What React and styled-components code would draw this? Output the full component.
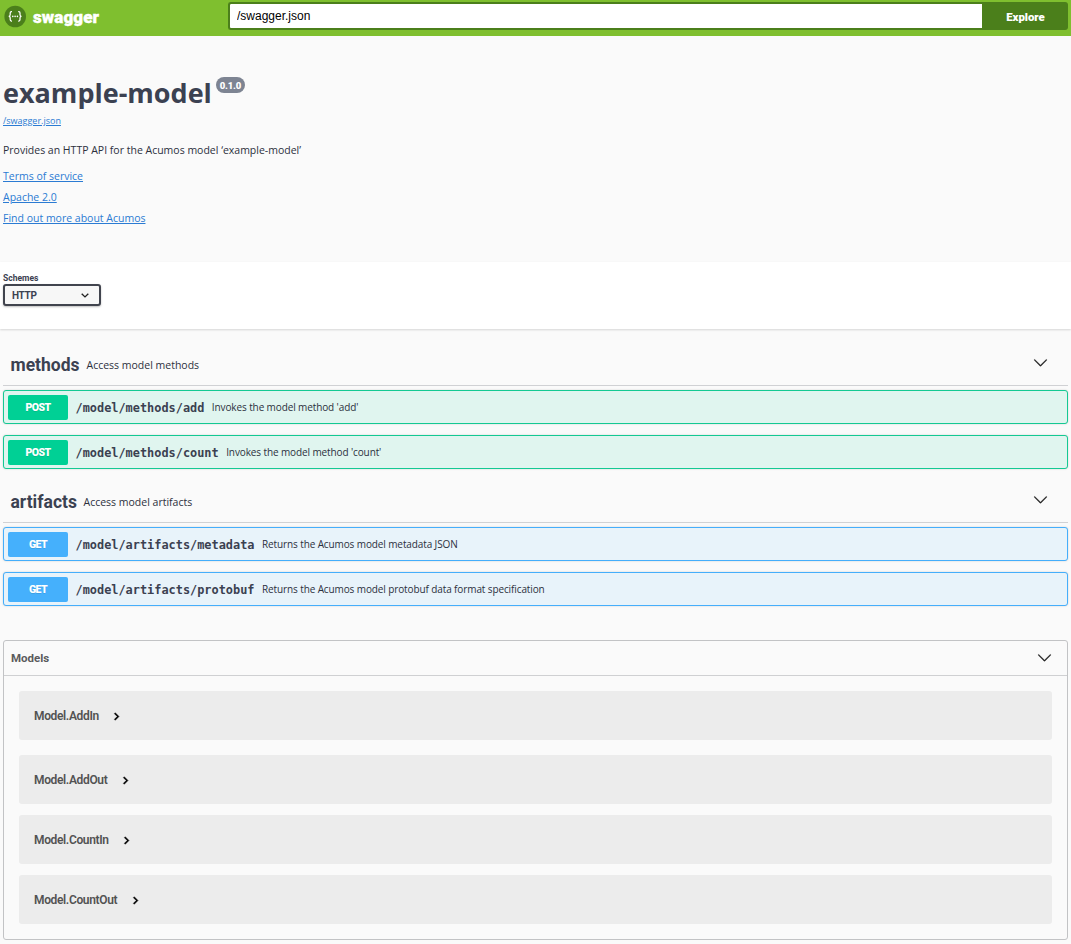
import React from "react";
import styled, { createGlobalStyle } from "styled-components";

const GlobalStyle = createGlobalStyle`
  *, *::before, *::after { box-sizing: border-box; }
  body {
    margin: 0;
    background: #fafafa;
    color: #3b4151;
    font-family: "Open Sans", sans-serif;
    font-size: 10.5px;
  }
`;

const display = `"Roboto", "Open Sans", sans-serif`;
const copyColor = "#2c303d";

const Page = styled.div`
  height: 944px;
  overflow: hidden;
`;

const TopBar = styled.header`
  display: flex;
  height: 36px;
  padding: 2px 3px 6px 4px;
  background: #7fbf2f;
`;

const Brand = styled.a`
  display: flex;
  align-items: center;
  width: 224px;
  color: #fff;
`;

const BrandIcon = styled.svg`
  width: 23px;
  height: 23px;
  margin-right: 6px;
`;

const BrandName = styled.span`
  font: 900 17px/22px ${display};
  letter-spacing: 0.1px;
  padding-top: 2px;
  -webkit-text-stroke: 0.4px #fff;
`;

const UrlInput = styled.input`
  flex: 1;
  min-width: 0;
  height: 28px;
  margin: 0;
  padding: 0 7px;
  border: 2px solid #4b7f1b;
  border-right: 0;
  border-radius: 3px 0 0 3px;
  outline: 0;
  background: #fff;
  color: #000;
  font: 12px/24px "Liberation Sans", Arial, sans-serif;
`;

const ExploreButton = styled.button`
  width: 86px;
  height: 28px;
  border: 0;
  border-radius: 0 3px 3px 0;
  padding: 1px 0 0 1px;
  background: #4b7f1b;
  color: #fff;
  font: 900 11.4px/24px ${display};
`;

const Info = styled.section`
  height: 226px;
  padding: 37px 3px 0;
`;

const TitleRow = styled.div`
  display: flex;
  align-items: flex-start;
`;

const Title = styled.h1`
  margin: 0;
  font: 700 27px/40px "Open Sans", sans-serif;
`;

const Version = styled.span`
  margin: 4px 0 0 4px;
  height: 16px;
  width: 29px;
  border-radius: 8px;
  background: #7d8492;
  color: #fff;
  text-align: center;
  font: 900 9.5px/17px ${display};
  letter-spacing: -0.2px;
`;

const SpecLink = styled.a`
  display: block;
  width: max-content;
  margin-top: 1px;
  color: #2b7bd3;
  font-size: 9px;
  line-height: 14px;
  text-decoration: underline;
`;

const Description = styled.p`
  margin: 14px 0 10px;
  color: ${copyColor};
  line-height: 16px;
`;

const InfoLink = styled.a`
  display: block;
  width: max-content;
  margin-bottom: 5px;
  color: #2b7bd3;
  line-height: 16px;
  text-decoration: underline;
`;

const SchemeBar = styled.section`
  height: 67px;
  padding: 10px 3px 0;
  background: #fff;
  box-shadow: 0 1px 2px rgba(0, 0, 0, 0.15);
`;

const SchemeLabel = styled.div`
  font: 700 8.5px/12px ${display};
`;

const SchemeSelect = styled.div`
  display: flex;
  align-items: center;
  justify-content: space-between;
  width: 98px;
  height: 22px;
  padding: 0 8px 0 7px;
  border: 2px solid #41444e;
  border-radius: 3px;
  background: #f7f7f7;
  box-shadow: 0 1px 2px rgba(0, 0, 0, 0.25);
  font: 700 10px/18px ${display};
  letter-spacing: -0.3px;
`;

const SchemeValue = styled.span`
  padding-top: 1px;
`;

const Content = styled.main`
  padding: 16px 3px 0;
`;

const TagSection = styled.section`
  height: 137px;
`;

const TagHeader = styled.div`
  display: flex;
  align-items: center;
  height: 41px;
  margin-bottom: 4px;
  padding: 0 20px 0 7.5px;
  border-bottom: 1px solid #d0d1d4;
`;

const TagName = styled.h2`
  margin: 0 7px 0 0;
  width: ${(p) => p.$w}px;
  white-space: nowrap;
  font: 700 17.5px/24px ${display};
`;

const TagText = styled.span`
  flex: 1;
  color: ${copyColor};
  line-height: 16px;
`;

const ArrowIcon = styled.svg`
  width: 15px;
  height: 15px;
  margin-top: ${(p) => p.$lift}px;
  fill: #222;
  stroke: #222;
  stroke-width: 0.3;
`;

const tones = {
  POST: { line: "#14c993", solid: "#00d095", bg: "#e0f5ef" },
  GET: { line: "#45aefb", solid: "#45b0fc", bg: "#e8f3fa" },
};

const Operation = styled.div`
  display: flex;
  align-items: center;
  height: 34px;
  margin-bottom: 11px;
  padding: 0 4px;
  border: 1px solid ${(p) => tones[p.$method].line};
  border-radius: 3px;
  background: ${(p) => tones[p.$method].bg};
  box-shadow: 0 0 2px rgba(0, 0, 0, 0.18);
`;

const Method = styled.span`
  width: 60px;
  height: 25px;
  border-radius: 2px;
  background: ${(p) => tones[p.$method].solid};
  color: #fff;
  text-align: center;
  text-shadow: 0 1px 0 rgba(0, 0, 0, 0.1);
  font: 900 10.5px/25px ${display};
  letter-spacing: -0.6px;
`;

const Path = styled.span`
  margin: 1px 7.5px 0 7.5px;
  font: 700 11.9px/18px "DejaVu Sans Mono", monospace;
`;

const Summary = styled.span`
  color: ${copyColor};
  font-size: 10px;
  letter-spacing: -0.11px;
  line-height: 16px;
`;

const Models = styled.section`
  height: 300px;
  margin-top: 21px;
  border: 1px solid #c2c3c5;
  border-radius: 3px;
`;

const ModelsHeader = styled.div`
  display: flex;
  align-items: center;
  justify-content: space-between;
  height: 35px;
  padding: 0 15px 0 7px;
  border-bottom: 1px solid #cfd0d2;
  color: #5a5a5c;
  font: 700 11.5px/18px ${display};
`;

const ModelList = styled.div`
  padding: 15px 15px 0;
`;

const Model = styled.div`
  display: flex;
  align-items: center;
  height: 49px;
  margin-bottom: 11px;
  padding-left: 15px;
  border-radius: 3px;
  background: #ececec;
  color: #525252;
  font: 600 12px/18px ${display};
  letter-spacing: -0.35px;

  &:first-child {
    margin-bottom: 15px;
  }
`;

const ModelName = styled.span`
  width: ${(p) => p.$w}px;
  white-space: nowrap;
`;

const ModelChevron = styled.svg`
  width: 15px;
  height: 15px;
  margin: 2px 0 0 10px;
`;

const Arrow = ({ lift }) => (
  <ArrowIcon $lift={lift} viewBox="0 0 20 20">
    <path d="M17.418 6.109c.272-.268.709-.268.979 0s.271.701 0 .969l-7.908 7.83c-.27.268-.707.268-.979 0l-7.908-7.83c-.27-.268-.27-.701 0-.969.271-.268.709-.268.979 0L10 13.25l7.418-7.141z" />
  </ArrowIcon>
);

const tags = [
  {
    name: "methods", text: "Access model methods", w: 69,
    ops: [
      ["POST", "/model/methods/add", "Invokes the model method 'add'"],
      ["POST", "/model/methods/count", "Invokes the model method 'count'"],
    ],
  },
  {
    name: "artifacts", text: "Access model artifacts", w: 66,
    ops: [
      ["GET", "/model/artifacts/metadata", "Returns the Acumos model metadata JSON"],
      ["GET", "/model/artifacts/protobuf", "Returns the Acumos model protobuf data format specification"],
    ],
  },
];

const models = [
  ["Model.AddIn", 65],
  ["Model.AddOut", 74],
  ["Model.CountIn", 75],
  ["Model.CountOut", 84],
];

export default function App() {
  return (
    <Page>
      <GlobalStyle />
      <TopBar>
        <Brand>
          <BrandIcon viewBox="0 0 23 23">
            <circle cx="11.2" cy="11.5" r="10.8" fill="#4b7f1b" />
            <g fill="none" stroke="#fff" strokeWidth="1.25">
              <path d="M8 6.7H7.4Q6.2 6.7 6.2 8V9.8Q6.2 11.3 4.7 11.3Q6.2 11.3 6.2 12.8V14.6Q6.2 16 7.4 16H8" />
              <path d="M14.2 6.7h.6Q16 6.7 16 8V9.8Q16 11.3 17.5 11.3Q16 11.3 16 12.8V14.6Q16 16 14.8 16h-.6" />
            </g>
            <g fill="#fff">
              <circle cx="8.8" cy="11.4" r=".8" />
              <circle cx="11.1" cy="11.4" r=".8" />
              <circle cx="13.4" cy="11.4" r=".8" />
            </g>
          </BrandIcon>
          <BrandName>swagger</BrandName>
        </Brand>
        <UrlInput defaultValue="/swagger.json" />
        <ExploreButton>Explore</ExploreButton>
      </TopBar>

      <Info>
        <TitleRow>
          <Title>example-model</Title>
          <Version>0.1.0</Version>
        </TitleRow>
        <SpecLink>/swagger.json</SpecLink>
        <Description>Provides an HTTP API for the Acumos model ‘example-model’</Description>
        <InfoLink>Terms of service</InfoLink>
        <InfoLink>Apache 2.0</InfoLink>
        <InfoLink>Find out more about Acumos</InfoLink>
      </Info>

      <SchemeBar>
        <SchemeLabel>Schemes</SchemeLabel>
        <SchemeSelect>
          <SchemeValue>HTTP</SchemeValue>
          <svg width="12" height="12" viewBox="0 0 12 12" fill="none" stroke="#222" strokeWidth="1.4">
            <path d="M2.7 4.8L6 7.9l3.3-3.1" />
          </svg>
        </SchemeSelect>
      </SchemeBar>

      <Content>
        {tags.map((tag) => (
          <TagSection key={tag.name}>
            <TagHeader>
              <TagName $w={tag.w}>{tag.name}</TagName>
              <TagText>{tag.text}</TagText>
              <Arrow lift={-6} />
            </TagHeader>
            {tag.ops.map(([method, path, summary]) => (
              <Operation key={path} $method={method}>
                <Method $method={method}>{method}</Method>
                <Path>{path}</Path>
                <Summary>{summary}</Summary>
              </Operation>
            ))}
          </TagSection>
        ))}

        <Models>
          <ModelsHeader>
            Models
            <Arrow lift={-2} />
          </ModelsHeader>
          <ModelList>
            {models.map(([name, w]) => (
              <Model key={name}>
                <ModelName $w={w}>{name}</ModelName>
                <ModelChevron viewBox="0 0 24 24">
                  <path d="M10 6L8.59 7.41 13.17 12l-4.58 4.59L10 18l6-6z" stroke="#000" strokeWidth=".8" />
                </ModelChevron>
              </Model>
            ))}
          </ModelList>
        </Models>
      </Content>
    </Page>
  );
}
